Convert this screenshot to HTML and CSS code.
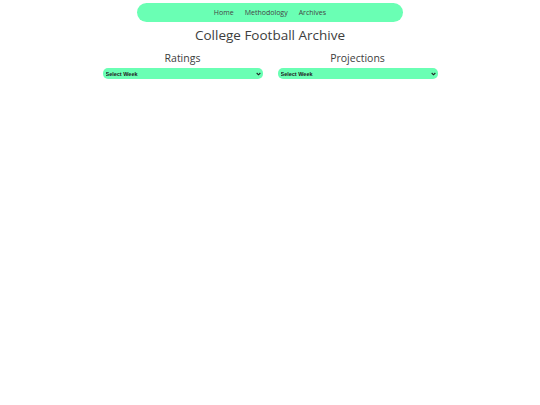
FILE: index.html
```html
<!DOCTYPE html>
<html lang="en">
<head>
<meta charset="utf-8">
<title>College Football Archive</title>
<link rel="stylesheet" href="styles.css">
</head>
<body>
  <nav class="topnav">
    <a href="#" class="nav-link">Home</a>
    <a href="#" class="nav-link">Methodology</a>
    <a href="#" class="nav-link">Archives</a>
  </nav>
  <h1 class="page-title">College Football Archive</h1>
  <main class="archive">
    <section class="archive-col">
      <h2 class="col-title">Ratings</h2>
      <select class="week-select">
        <option>Select Week</option>
      </select>
    </section>
    <section class="archive-col">
      <h2 class="col-title">Projections</h2>
      <select class="week-select">
        <option>Select Week</option>
      </select>
    </section>
  </main>
</body>
</html>
```

FILE: styles.css
```css
* {
  box-sizing: border-box;
}

body {
  margin: 0;
  background: #fff;
  color: #3d3d3d;
  font-family: "Open Sans", "Noto Sans", sans-serif;
}

.topnav {
  width: 266px;
  height: 19px;
  margin: 3px auto 0;
  background: #6affb4;
  border-radius: 10px;
  display: flex;
  justify-content: center;
  align-items: center;
  gap: 11px;
}

.nav-link {
  font-size: 7px;
  color: #444;
  text-decoration: none;
}

.page-title {
  margin: 4px 0 0;
  text-align: center;
  font-size: 13.5px;
  font-weight: 500;
  line-height: 18px;
}

.archive {
  width: 335px;
  margin: 8px auto 0;
  display: grid;
  grid-template-columns: 160px 160px;
  column-gap: 15px;
}

.archive-col {
  display: flex;
  flex-direction: column;
  align-items: center;
}

.col-title {
  margin: 0;
  font-size: 10.5px;
  font-weight: 500;
  line-height: 13px;
}

/* pill-shaped dropdown with a small chevron */
.week-select {
  appearance: none;
  -webkit-appearance: none;
  width: 100%;
  height: 11px;
  margin-top: 3px;
  padding: 0 3px;
  border: none;
  border-radius: 5px;
  background-color: #6affb4;
  background-image: url("data:image/svg+xml,%3Csvg xmlns='http://www.w3.org/2000/svg' width='6' height='4' viewBox='0 0 6 4'%3E%3Cpath d='M0.8 0.8 L3 3 L5.2 0.8' fill='none' stroke='%23222' stroke-width='1.3'/%3E%3C/svg%3E");
  background-repeat: no-repeat;
  background-position: right 2px center;
  background-size: 5px 4px;
  color: #222;
  font-family: "Liberation Sans", Arial, sans-serif;
  font-size: 5.5px;
  font-weight: 700;
}
```
